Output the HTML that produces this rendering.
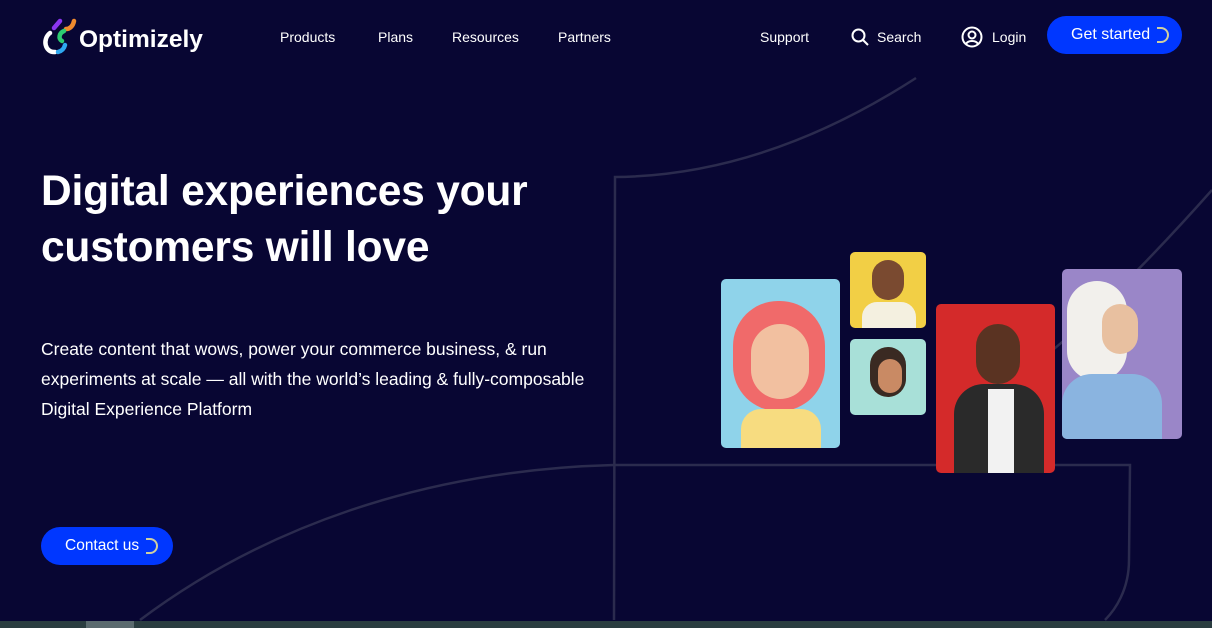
<!DOCTYPE html>
<html><head><meta charset="utf-8"><style>
*{margin:0;padding:0;box-sizing:border-box}
body{width:1212px;height:628px;overflow:hidden;background:#080633;font-family:"Liberation Sans",sans-serif;color:#fff;position:relative}
.nav a{position:absolute;top:29px;font-size:14px;color:#fff;text-decoration:none}
.btn{position:absolute;background:#0037ff;border-radius:20px;color:#fff;font-size:16px;display:flex;align-items:center}
.spin{display:inline-block;width:12px;height:16px;border:2px solid #cfcfa0;border-left:none;border-radius:0 10px 10px 0;margin-left:7px}
h1{position:absolute;left:41px;top:164px;font-size:42.5px;line-height:56px;font-weight:700;letter-spacing:-0.2px}
p{position:absolute;left:41px;top:334px;font-size:17.5px;line-height:30px;width:560px}
.ph{position:absolute;border-radius:5px;overflow:hidden}
</style></head><body>
<svg width="1212" height="628" style="position:absolute;left:0;top:0" fill="none" stroke="#2b2b4e" stroke-width="2.5">
<path d="M916 78 C820 140 720 176 615 177 L614 620"/>
<path d="M140 620 C260 530 420 470 614 465 L1130 465 L1129 560 C1129 590 1115 610 1105 620"/>
<path d="M1212 190 C1150 260 1080 330 1040 360"/>
</svg>
<svg style="position:absolute;left:40px;top:17px" width="40" height="40" viewBox="0 0 40 40" fill="none" stroke-linecap="round" stroke-width="4.5">
<path d="M20 4 L14 11" stroke="#8a35f0"/>
<path d="M34 4 C33 9 30 12 26 12" stroke="#f08a2e"/>
<path d="M24 14 C19 16 18 22 22 24" stroke="#2ecc71"/>
<path d="M10 16 C2 22 5 36 15 35" stroke="#fff"/>
<path d="M18 35 C22 34 24 32 25 28" stroke="#2ea8f0"/>
</svg>
<div style="position:absolute;left:79px;top:26px;font-size:24.5px;font-weight:700">Optimizely</div>
<div class="nav">
<a style="left:280px">Products</a><a style="left:378px">Plans</a><a style="left:452px">Resources</a><a style="left:558px">Partners</a>
<a style="left:760px">Support</a><a style="left:877px">Search</a><a style="left:992px">Login</a>
</div>
<svg style="position:absolute;left:851px;top:28px" width="18" height="18" viewBox="0 0 18 18" fill="none" stroke="#fff" stroke-width="2"><circle cx="7.5" cy="7.5" r="6"/><path d="M12 12 L17 17"/></svg>
<svg style="position:absolute;left:961px;top:26px" width="22" height="22" viewBox="0 0 22 22" fill="none" stroke="#fff" stroke-width="2"><circle cx="11" cy="11" r="9.5"/><circle cx="11" cy="9" r="3.5"/><path d="M5 18 C7 14 15 14 17 18"/></svg>
<div class="btn" style="left:1047px;top:16px;width:135px;height:38px;padding-left:24px">Get started<span class="spin"></span></div>
<h1>Digital experiences your<br>customers will love</h1>
<p>Create content that wows, power your commerce business, &amp; run experiments at scale — all with the world’s leading &amp; fully-composable Digital Experience Platform</p>
<div class="btn" style="left:41px;top:527px;width:132px;height:38px;padding-left:24px;font-size:15.5px">Contact us<span class="spin"></span></div>
<div class="ph" style="left:721px;top:279px;width:119px;height:169px;background:#8fd3ea">
<div style="position:absolute;left:12px;top:22px;width:92px;height:110px;border-radius:45px;background:#f06a6a"></div>
<div style="position:absolute;left:30px;top:45px;width:58px;height:75px;border-radius:30px;background:#f2c0a0"></div>
<div style="position:absolute;left:20px;top:130px;width:80px;height:45px;border-radius:20px 20px 0 0;background:#f7dc80"></div></div>
<div class="ph" style="left:850px;top:252px;width:76px;height:76px;background:#f2cf45">
<div style="position:absolute;left:22px;top:8px;width:32px;height:40px;border-radius:16px;background:#7a4a30"></div>
<div style="position:absolute;left:12px;top:50px;width:54px;height:30px;border-radius:15px 15px 0 0;background:#f4f0e0"></div></div>
<div class="ph" style="left:850px;top:339px;width:76px;height:76px;background:#a8e0d8">
<div style="position:absolute;left:20px;top:8px;width:36px;height:50px;border-radius:18px;background:#3a2a22"></div>
<div style="position:absolute;left:28px;top:20px;width:24px;height:34px;border-radius:12px;background:#c98a64"></div></div>
<div class="ph" style="left:936px;top:304px;width:119px;height:169px;background:#d42a2a">
<div style="position:absolute;left:40px;top:20px;width:44px;height:60px;border-radius:22px;background:#5a3322"></div>
<div style="position:absolute;left:18px;top:80px;width:90px;height:95px;border-radius:30px 30px 0 0;background:#2a2a2a"></div>
<div style="position:absolute;left:52px;top:85px;width:26px;height:90px;background:#f2f2f2"></div></div>
<div class="ph" style="left:1062px;top:269px;width:120px;height:170px;background:#9a86c8">
<div style="position:absolute;left:5px;top:12px;width:60px;height:100px;border-radius:30px;background:#f2f0ec"></div>
<div style="position:absolute;left:40px;top:35px;width:36px;height:50px;border-radius:18px;background:#e8c0a0"></div>
<div style="position:absolute;left:0;top:105px;width:100px;height:65px;border-radius:30px 30px 0 0;background:#8ab4e0"></div></div>
<div style="position:absolute;left:0;top:621px;width:1212px;height:7px;background:#2a3d40"></div>
<div style="position:absolute;left:86px;top:621px;width:48px;height:7px;background:#5a6a6e"></div>
</body></html>
